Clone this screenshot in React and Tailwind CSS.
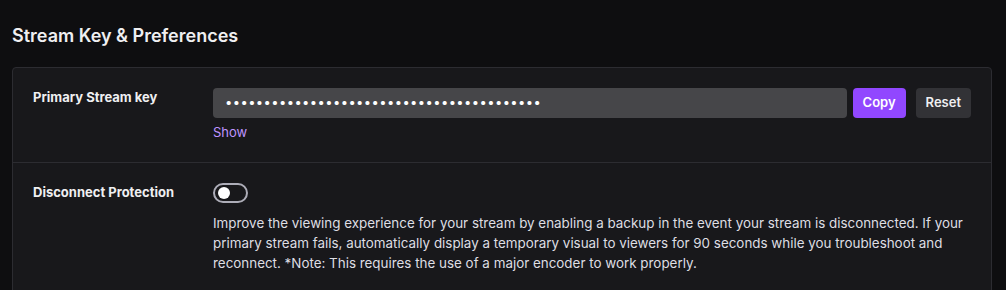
export default function App() {
  return (
    <div className="min-h-[290px] bg-[#0e0e10] pl-3 pr-[14px] pt-[24px] font-['Inter',sans-serif] text-[#efeff1]">
      <h2 className="text-lg font-semibold leading-6">Stream Key &amp; Preferences</h2>

      <div className="mt-[19px] rounded-t border border-[#2c2c31] bg-[#18181b]">
        {/* Stream key */}
        <div className="flex px-5 pt-5 pb-5 border-b border-[#2c2c31]">
          <div className="w-[180px] shrink-0 text-[13px] font-bold leading-[18px]">Primary Stream key</div>
          <div className="flex-1">
            <div className="flex gap-[6px]">
              <div className="flex h-[30px] flex-1 items-center rounded bg-[#464649] px-3 text-[13px] tracking-[0.4px] text-white">
                •••••••••••••••••••••••••••••••••••••••••
              </div>
              <button className="h-[30px] rounded bg-[#9147ff] px-[10px] text-[13px] font-semibold text-white">Copy</button>
              <button className="ml-[4px] h-[30px] rounded bg-[#323236] px-[10px] text-[13px] font-semibold text-[#efeff1]">Reset</button>
            </div>
            <button className="mt-[4px] block text-[13px] leading-5 text-[#bf94ff]">Show</button>
          </div>
        </div>

        {/* Disconnect protection */}
        <div className="flex px-5 pt-5 pb-5">
          <div className="w-[180px] shrink-0 text-[13px] font-bold leading-[18px]">Disconnect Protection</div>
          <div className="flex-1">
            <div className="flex h-5 w-[35px] items-center rounded-full border-2 border-[#adadb8] px-[3px]">
              <span className="h-3 w-3 rounded-full bg-white"></span>
            </div>
            <p className="mt-[10px] text-[13.4px] leading-5 text-[#dedee3]">
              Improve the viewing experience for your stream by enabling a backup in the event your stream is disconnected. If your primary stream fails, automatically display a temporary visual to viewers for 90 seconds while you troubleshoot and reconnect. *Note: This requires the use of a major encoder to work properly.
            </p>
          </div>
        </div>
      </div>
    </div>
  );
}
